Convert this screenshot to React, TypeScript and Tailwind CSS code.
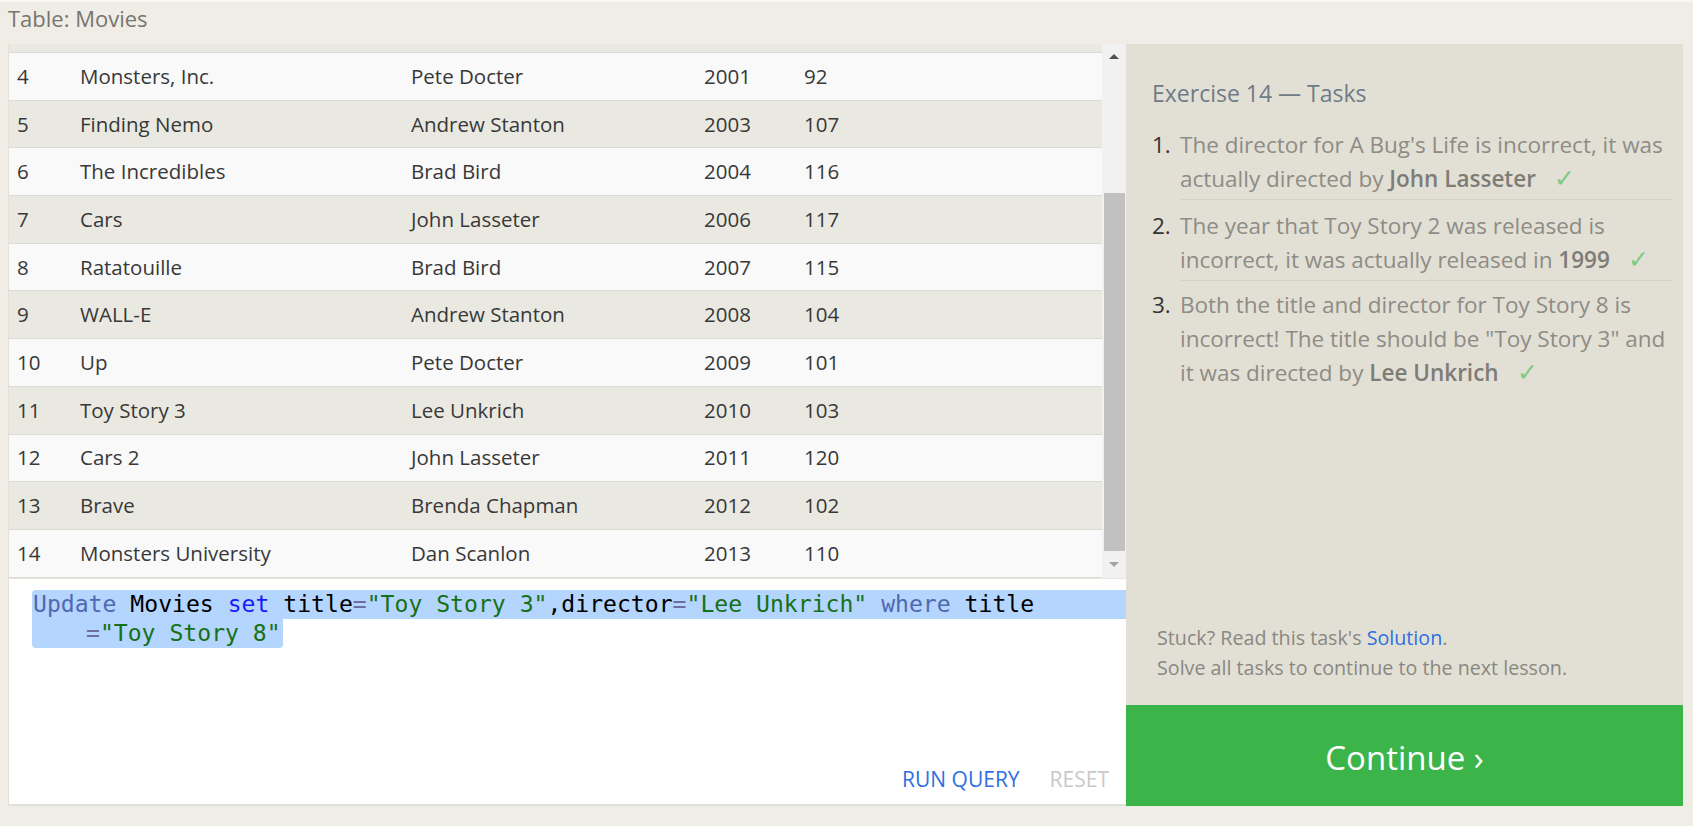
import React from 'react';

type Movie = { id: number; title: string; director: string; year: number; length: number };

const movies: Movie[] = [
    { id: 4, title: 'Monsters, Inc.', director: 'Pete Docter', year: 2001, length: 92 },
    { id: 5, title: 'Finding Nemo', director: 'Andrew Stanton', year: 2003, length: 107 },
    { id: 6, title: 'The Incredibles', director: 'Brad Bird', year: 2004, length: 116 },
    { id: 7, title: 'Cars', director: 'John Lasseter', year: 2006, length: 117 },
    { id: 8, title: 'Ratatouille', director: 'Brad Bird', year: 2007, length: 115 },
    { id: 9, title: 'WALL-E', director: 'Andrew Stanton', year: 2008, length: 104 },
    { id: 10, title: 'Up', director: 'Pete Docter', year: 2009, length: 101 },
    { id: 11, title: 'Toy Story 3', director: 'Lee Unkrich', year: 2010, length: 103 },
    { id: 12, title: 'Cars 2', director: 'John Lasseter', year: 2011, length: 120 },
    { id: 13, title: 'Brave', director: 'Brenda Chapman', year: 2012, length: 102 },
    { id: 14, title: 'Monsters University', director: 'Dan Scanlon', year: 2013, length: 110 },
];

const Check = () => <span className="ml-[18px] text-[25px] leading-none text-[#7ccb80] font-light">✓</span>;

const App = () => {
    return (
        <div className="w-[1693px] h-[826px] bg-[#efede5] border-t-2 border-[#f7f6f2] font-['Open_Sans',sans-serif] overflow-hidden">
            <div className="h-[42px] pl-[8px] text-[22px] text-[#777570] leading-[32px]">Table: Movies</div>

            <div className="flex h-[762px] pr-[10px]">
                {/* left: table + editor */}
                <div className="w-[1118px] ml-[8px] flex flex-col bg-white border-b-2 border-l border-[#e2e1d8]">
                    <div className="flex h-[535px] border-b border-[#e6e5de]">
                        <div className="flex-1 flex flex-col text-[20.5px] text-[#383838]">
                            <div className="h-[9px] bg-[#eae9e1] border-b border-[#dcdcd6]"></div>
                            {movies.map((m, i) => (
                                <div
                                    key={m.id}
                                    className={`flex items-center h-[47.7px] border-b border-[#dcdcd6] ${i % 2 === 0 ? 'bg-[#f9f9f9]' : 'bg-[#eae9e1]'}`}
                                >
                                    <span className="w-[71px] pl-[8px]">{m.id}</span>
                                    <span className="w-[331px]">{m.title}</span>
                                    <span className="w-[293px]">{m.director}</span>
                                    <span className="w-[100px]">{m.year}</span>
                                    <span>{m.length}</span>
                                </div>
                            ))}
                        </div>
                        {/* scrollbar */}
                        <div className="w-[24px] bg-[#f1f1f1] flex flex-col items-center">
                            <div className="h-[20px] w-full flex items-center justify-center pt-[4px]">
                                <div className="w-0 h-0 border-l-[5px] border-r-[5px] border-b-[5px] border-l-transparent border-r-transparent border-b-[#505050]"></div>
                            </div>
                            <div className="h-[129px]"></div>
                            <div className="w-[21px] h-[358px] bg-[#c1c1c1]"></div>
                            <div className="flex-1 w-full flex items-center justify-center">
                                <div className="w-0 h-0 border-l-[5px] border-r-[5px] border-t-[5px] border-l-transparent border-r-transparent border-t-[#a3a3a3]"></div>
                            </div>
                        </div>
                    </div>

                    {/* editor */}
                    <div className="flex-1 flex flex-col">
                        <div className="pt-[11px] pl-[23px] font-['DejaVu_Sans_Mono',monospace] text-[23.1px] leading-[29px]">
                            <div className="bg-[#b4d5fe] pl-[1px] rounded-tl-[4px] whitespace-pre">
                                <span className="text-[#5068b0]">Update</span>
                                <span className="text-black"> Movies </span>
                                <span className="text-[#1a1aff]">set</span>
                                <span className="text-black"> title</span>
                                <span className="text-[#6e6e9e]">=</span>
                                <span className="text-[#167016]">"Toy Story 3"</span>
                                <span className="text-black">,director</span>
                                <span className="text-[#6e6e9e]">=</span>
                                <span className="text-[#167016]">"Lee Unkrich"</span>
                                <span className="text-black"> </span>
                                <span className="text-[#5068b0]">where</span>
                                <span className="text-black"> title</span>
                            </div>
                            <div className="bg-[#b4d5fe] w-[251px] pl-[54px] rounded-b-[4px] whitespace-pre">
                                <span className="text-[#6e6e9e]">=</span>
                                <span className="text-[#167016]">"Toy Story 8"</span>
                            </div>
                        </div>
                        <div className="mt-auto flex justify-end gap-[30px] pr-[17px] pb-[9px] text-[21px]">
                            <span className="text-[#2f6fe0]">RUN QUERY</span>
                            <span className="text-[#c9c9c9]">RESET</span>
                        </div>
                    </div>
                </div>

                {/* right: tasks */}
                <div className="w-[557px] flex flex-col bg-[#e2e0d5]">
                    <div className="flex-1 flex flex-col pl-[26px] pr-[11px] pt-[32px]">
                        <h2 className="text-[23px] text-[#6f7b88] leading-[34px]">Exercise 14 — Tasks</h2>
                        <ol className="mt-[18px] text-[22.5px] leading-[34.4px] text-[#8e8c86]">
                            <li className="flex">
                                <span className="w-[28px] shrink-0 text-[#333]">1.</span>
                                <div className="flex-1 border-b border-[#d5d3c8] pb-[2px]">
                                    The director for A Bug's Life is incorrect, it was actually directed by <b className="font-semibold text-[#7e7c77]">John Lasseter</b>
                                    <Check />
                                </div>
                            </li>
                            <li className="flex pt-[9px]">
                                <span className="w-[28px] shrink-0 text-[#333]">2.</span>
                                <div className="flex-1 border-b border-[#d5d3c8] pb-[2px]">
                                    The year that Toy Story 2 was released is incorrect, it was actually released in <b className="font-semibold text-[#7e7c77]">1999</b>
                                    <Check />
                                </div>
                            </li>
                            <li className="flex pt-[7px]">
                                <span className="w-[28px] shrink-0 text-[#333]">3.</span>
                                <div className="flex-1">
                                    Both the title and director for Toy Story 8 is incorrect! The title should be "Toy Story 3" and it was directed by <b className="font-semibold text-[#7e7c77]">Lee Unkrich</b>
                                    <Check />
                                </div>
                            </li>
                        </ol>
                        <div className="mt-auto pb-[22px] pl-[5px] text-[19.7px] leading-[30px] text-[#8a8782]">
                            <p>Stuck? Read this task's <span className="text-[#2f6fe0]">Solution</span>.</p>
                            <p>Solve all tasks to continue to the next lesson.</p>
                        </div>
                    </div>
                    <div className="h-[101px] bg-[#3bb54a] flex items-center justify-center pt-[4px] text-white text-[33px]">
                        Continue ›
                    </div>
                </div>
            </div>
        </div>
    );
};

export default App;
